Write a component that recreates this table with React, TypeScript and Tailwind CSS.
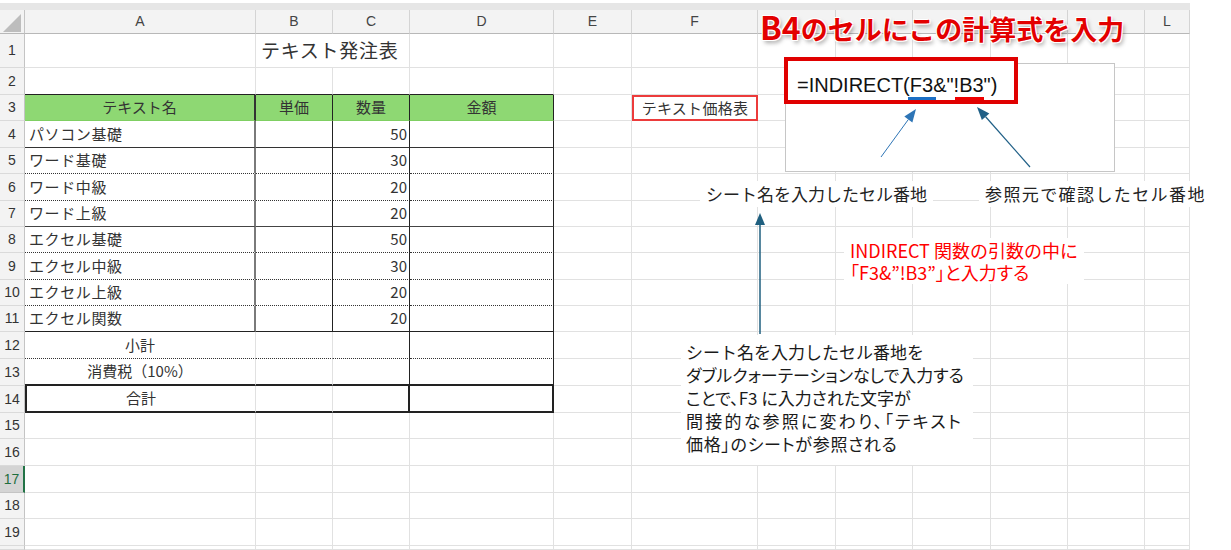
import type { ReactNode } from "react";

const COL_W = [
  "w-[231px]",
  "w-[77px]",
  "w-[77px]",
  "w-[144px]",
  "w-[78px]",
  "w-[126px]",
  "w-[78px]",
  "w-[77px]",
  "w-[78px]",
  "w-[77px]",
  "w-[77px]",
  "w-[45px]",
];
// G-K sit under the title callout, so their letters are covered
const LETTERS = ["A", "B", "C", "D", "E", "F", "", "", "", "", "", "L"];
const ROW_H = [
  "h-[34px]", "h-[27px]", "h-[26px]", "h-[27px]", "h-[26px]",
  "h-[27px]", "h-[26px]", "h-[26px]", "h-[27px]", "h-[26px]",
  "h-[26px]", "h-[27px]", "h-[27px]", "h-[27px]", "h-[26px]",
  "h-[27px]", "h-[27px]", "h-[26px]", "h-[27px]", "h-[4px]",
];

const GRID = "border-r border-b border-[#e1e1e1]";
const HEAD = "bg-[#8ed873] border-b border-b-[#7fcf62] justify-center";

const items: [string, number][] = [
  ["パソコン基礎", 50],
  ["ワード基礎", 30],
  ["ワード中級", 20],
  ["ワード上級", 20],
  ["エクセル基礎", 50],
  ["エクセル中級", 30],
  ["エクセル上級", 20],
  ["エクセル関数", 20],
];

// bottom edge of rows 4-11
const itemBottoms = [
  "border-b-[#333]",
  "border-b-[#333] [border-bottom-style:dotted]",
  "border-b-[#333] [border-bottom-style:dotted]",
  "border-b-[#444]",
  "border-b-[#333] [border-bottom-style:dotted]",
  "border-b-[#333] [border-bottom-style:dotted]",
  "border-b-[#333] [border-bottom-style:dotted]",
  "border-b-[#222]",
];

type Cell = { cls: string; body?: ReactNode };

function cellAt(r: number, c: number): Cell {
  // r is 0-based (row 1 = 0)
  if (r === 0 && c === 1) {
    return {
      cls: "border-b border-b-[#e1e1e1] overflow-visible",
      body: (
        <span className="whitespace-nowrap pl-[5px] text-[19px] tracking-[0.7px] text-[#333]">
          テキスト発注表
        </span>
      ),
    };
  }
  if (r === 1 && c < 4) {
    return { cls: "border-r border-b border-r-[#e1e1e1] border-b-[#222]" };
  }
  if (r === 2) {
    const heads = ["テキスト名", "単価", "数量", "金額"];
    if (c === 0) return { cls: `${HEAD} border-r-2 border-r-[#333]`, body: heads[0] };
    if (c < 4) return { cls: `${HEAD} border-r border-r-[#222]`, body: heads[c] };
    if (c === 5) {
      return {
        cls: "border-2 border-[#ec3b3b] justify-center",
        body: <span className="text-[15px] tracking-[0.3px] text-[#333]">テキスト価格表</span>,
      };
    }
  }
  if (r >= 3 && r <= 10 && c < 4) {
    const i = r - 3;
    const b = itemBottoms[i];
    if (c === 0) {
      return {
        cls: `border-r-2 border-b border-r-[#7a7a7a] ${b} pl-[4px]`,
        body: <span className="tracking-[0.6px]">{items[i][0]}</span>,
      };
    }
    if (c === 2) {
      return {
        cls: `border-r border-b border-r-[#222] ${b} justify-end pr-[2px]`,
        body: items[i][1],
      };
    }
    return { cls: `border-r border-b border-r-[#222] ${b}` };
  }
  if (r === 11 && c < 4) {
    const dot = "border-b border-b-[#333] [border-bottom-style:dotted]";
    if (c === 0) return { cls: `border-r border-r-[#e1e1e1] ${dot} justify-center`, body: "小計" };
    if (c === 1) return { cls: `border-r border-r-[#e1e1e1] ${dot}` };
    return { cls: `border-r border-r-[#222] ${dot}` };
  }
  if (r === 12 && c < 4) {
    if (c === 0)
      return {
        cls: "border-r border-b-2 border-r-[#e1e1e1] border-b-[#222] justify-center",
        body: "消費税（10%）",
      };
    if (c === 1) return { cls: "border-r border-b-2 border-r-[#e1e1e1] border-b-[#222]" };
    return { cls: "border-r border-b-2 border-r-[#222] border-b-[#222]" };
  }
  if (r === 13 && c < 4) {
    if (c === 0)
      return {
        cls: "border-l-2 border-r border-b-2 border-l-[#222] border-r-[#e1e1e1] border-b-[#222] justify-center",
        body: "合計",
      };
    if (c === 1) return { cls: "border-r border-b-2 border-r-[#e1e1e1] border-b-[#222]" };
    return { cls: "border-r-2 border-b-2 border-[#222]" };
  }
  return { cls: GRID };
}

function Arrow({
  x1, y1, x2, y2, color, width = 1, head = 12, hw = 5,
}: {
  x1: number; y1: number; x2: number; y2: number; color: string;
  width?: number; head?: number; hw?: number;
}) {
  const dx = x2 - x1;
  const dy = y2 - y1;
  const len = Math.hypot(dx, dy);
  const ux = dx / len;
  const uy = dy / len;
  const bx = x2 - ux * head;
  const by = y2 - uy * head;
  const px = -uy;
  const py = ux;
  return (
    <g>
      <line x1={x1} y1={y1} x2={bx} y2={by} stroke={color} strokeWidth={width} />
      <polygon
        points={`${x2},${y2} ${bx + px * hw},${by + py * hw} ${bx - px * hw},${by - py * hw}`}
        fill={color}
      />
    </g>
  );
}

function Sheet() {
  return (
    <div className="w-[1190px]">
      <div className="h-[3px] bg-white" />
      <div className="h-[7px] bg-[#e6e6e6]" />

      {/* column headers */}
      <div className="flex h-[24px] bg-[#f3f3f3] font-['Liberation_Sans',sans-serif] text-[14px] text-[#444]">
        <div className="relative h-full w-[25px] shrink-0 border-r border-b border-r-[#c4c4c4] border-b-[#b8b8b8]">
          <svg className="absolute left-0 top-0" width="25" height="24" viewBox="0 0 25 24">
            <polygon points="3,22 21,4 21,22" fill="#bdbdbd" />
          </svg>
        </div>
        {LETTERS.map((l, c) => (
          <div
            key={c}
            className={`${COL_W[c]} flex h-full shrink-0 items-center justify-center border-r border-b border-r-[#d4d4d4] border-b-[#b8b8b8]`}
          >
            {l}
          </div>
        ))}
      </div>

      {ROW_H.map((h, r) => (
        <div key={r} className={`flex ${h}`}>
          <div
            className={
              r === 16
                ? "flex h-full w-[25px] shrink-0 items-center justify-center border-r-2 border-b border-r-[#217346] border-b-[#c4c4c4] bg-[#d4d4d4] font-['Liberation_Sans',sans-serif] text-[14px] text-[#1e6e3e]"
                : "flex h-full w-[25px] shrink-0 items-center justify-center border-r border-b border-r-[#c4c4c4] border-b-[#dadada] bg-[#f3f3f3] font-['Liberation_Sans',sans-serif] text-[14px] text-[#333]"
            }
          >
            {r < 19 ? r + 1 : ""}
          </div>
          {COL_W.map((w, c) => {
            const cell = cellAt(r, c);
            return (
              <div
                key={c}
                className={`${w} flex h-full shrink-0 items-center text-[15px] text-[#333] ${cell.cls}`}
              >
                {cell.body}
              </div>
            );
          })}
        </div>
      ))}
    </div>
  );
}

export default function App() {
  return (
    <div className="relative h-[550px] w-[1231px] overflow-hidden bg-white font-['Noto_Sans_CJK_JP',sans-serif]">
      <Sheet />

      {/* title callout */}
      <div className="absolute left-[760px] top-[8px] whitespace-nowrap text-[27px] font-bold leading-[36px] text-[#e30000] [text-shadow:1px_1px_0_#fff,-1px_-1px_0_#fff,1px_-1px_0_#fff,-1px_1px_0_#fff,2px_3px_4px_rgba(0,0,0,0.35)]">
        <span className="text-[32px]">B4</span>のセルにこの計算式を入力
      </div>

      {/* formula box */}
      <div className="absolute left-[785px] top-[63px] h-[109px] w-[330px] border border-[#c6c6c6] bg-white" />
      <div className="absolute left-[784px] top-[57px] h-[47px] w-[234px] border-4 border-[#e00000] bg-white pl-[9px] pt-[12px] font-['Liberation_Sans',sans-serif] text-[20px] leading-[24px] text-[#111]">
        =INDIRECT(
        <span className="relative">
          F3
          <span className="absolute left-[-2px] right-[-3px] top-[23px] h-[3px] bg-[#1c6fc4]" />
        </span>
        &amp;"!
        <span className="relative">
          B3
          <span className="absolute left-[-4px] right-[0px] top-[23px] h-[3px] bg-[#ee0000]" />
        </span>
        ")
      </div>

      {/* labels under the formula */}
      <div className="absolute left-[700px] top-[181px] whitespace-nowrap bg-white px-[6px] text-[17px] leading-[26px] text-[#222]">
        シート名を入力したセル番地
      </div>
      <div className="absolute left-[979px] top-[181px] whitespace-nowrap bg-white px-[6px] text-[17px] leading-[26px] tracking-[1.4px] text-[#222]">
        参照元で確認したセル番地
      </div>

      <div className="absolute left-[844px] top-[238px] whitespace-nowrap bg-white px-[6px] py-[1px] text-[18px] leading-[22px] text-[#ff0000]">
        <div>INDIRECT 関数の引数の中に</div>
        <div className="[font-feature-settings:'palt']">「F3&”!B3”」と入力する</div>
      </div>

      <div className="absolute left-[681px] top-[335px] h-[130px] w-[292px] bg-white px-[5px] pt-[5px] text-[17px] leading-[23px] text-[#1a1a1a]">
        <div>シート名を入力したセル番地を</div>
        <div className="[font-feature-settings:'palt']">ダブルクォーテーションなしで入力する</div>
        <div className="[font-feature-settings:'palt']">ことで、F3 に入力された文字が</div>
        <div className="tracking-[2.2px] [font-feature-settings:'palt']">間接的な参照に変わり、「テキスト</div>
        <div className="tracking-[0.7px] [font-feature-settings:'palt']">価格」のシートが参照される</div>
      </div>

      {/* arrows */}
      <svg className="pointer-events-none absolute left-0 top-0" width="1231" height="550">
        <Arrow x1={881} y1={157} x2={916} y2={109} color="#2e75b6" width={1} head={13} hw={5} />
        <Arrow x1={1030} y1={167} x2={977} y2={107} color="#1f5f86" width={1.2} head={13} hw={5} />
        <Arrow x1={760} y1={334} x2={760} y2={213} color="#1f5f7f" width={1.5} head={12} hw={5} />
      </svg>
    </div>
  );
}
